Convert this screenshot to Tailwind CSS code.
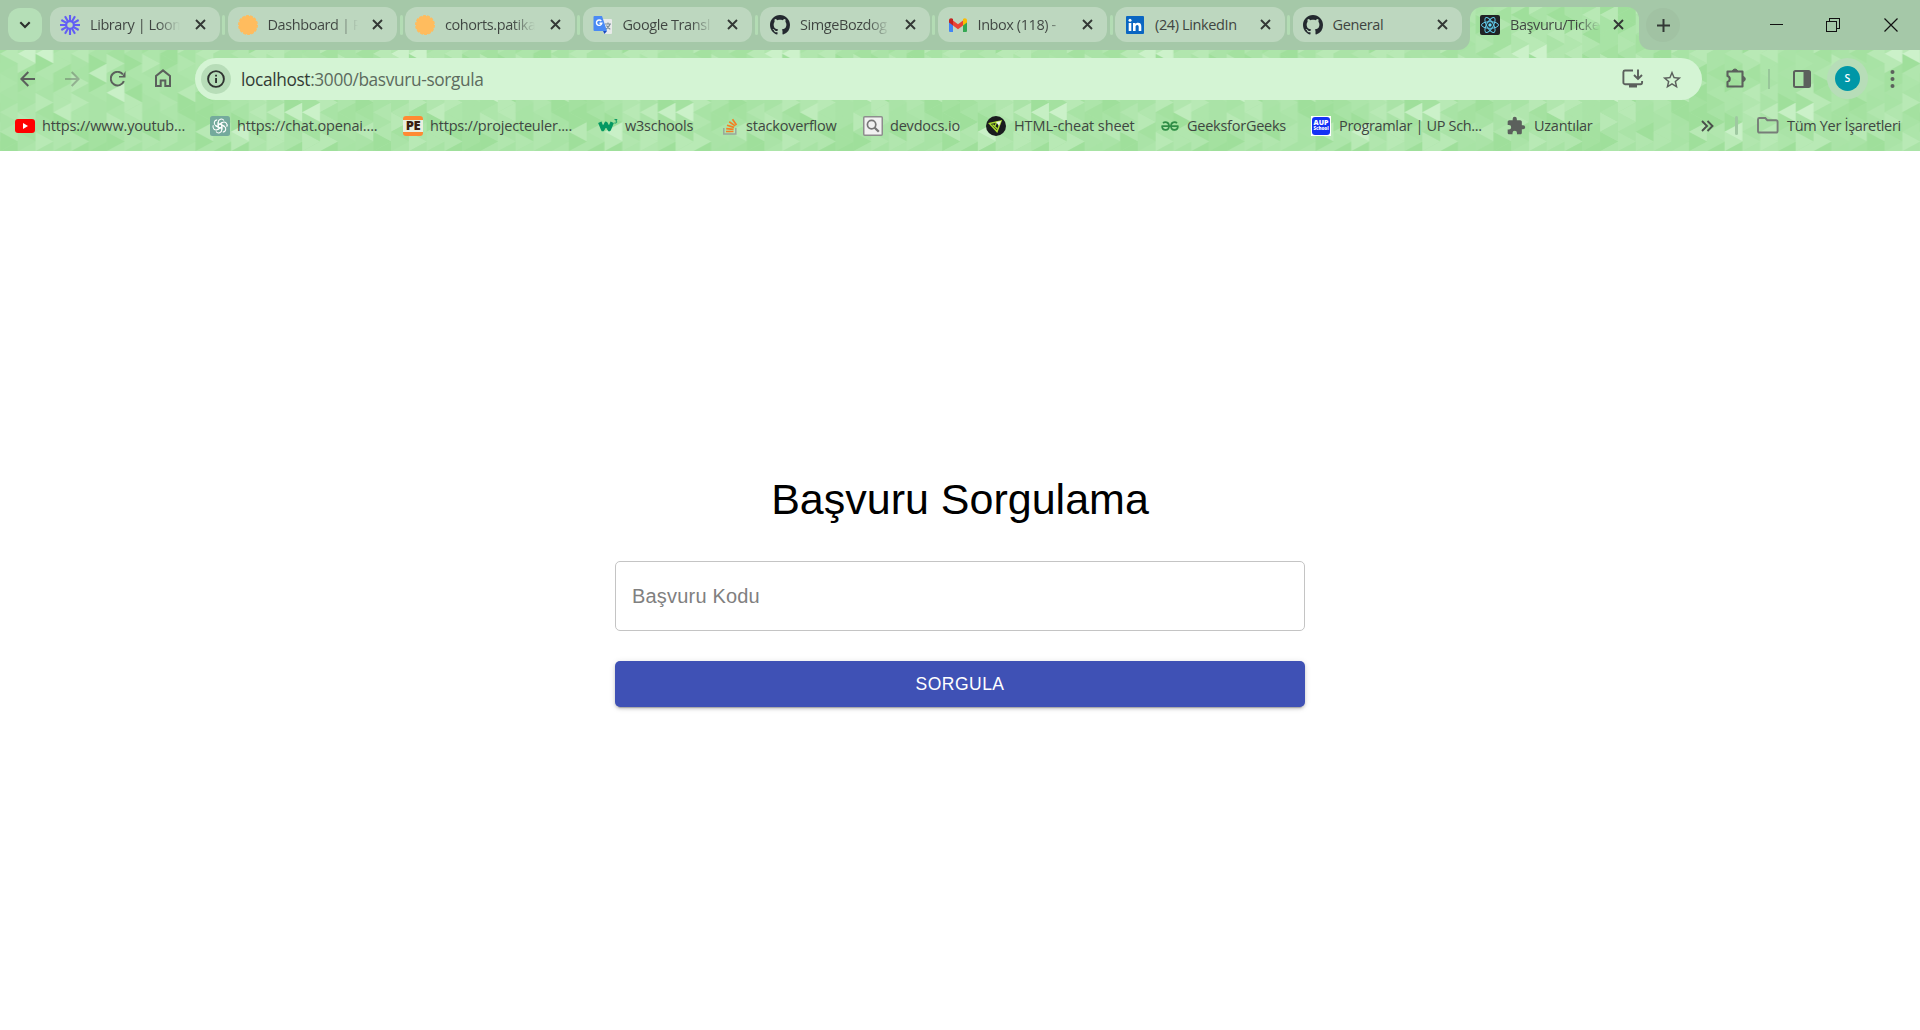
<!DOCTYPE html>
<html lang="tr">
<head>
<meta charset="utf-8">
<title>Başvuru/Ticket</title>
<script src="https://cdn.jsdelivr.net/npm/@tailwindcss/browser@4"></script>
</head>
<body class="h-[1030px] w-[1920px] overflow-hidden bg-white">
<!-- shared tab icons -->
<svg class="hidden">
  <symbol id="i-loom" viewBox="0 0 20 20"><g stroke="#625df5" fill="none"><circle cx="10" cy="10" r="3.900" stroke-width="2.300"/><path d="M10 0v6M10 14v6M0 10h6M14 10h6M5 1.340l2.700 4.600M12.300 14.060l2.700 4.600M1.340 5l4.600 2.700M14.060 12.300l4.600 2.700M1.340 15l4.600-2.700M14.060 7.700l4.600-2.700M5 18.660l2.700-4.600M12.300 5.940l2.700-4.600" stroke-width="2.100"/></g></symbol>
  <symbol id="i-sun" viewBox="0 0 20 20"><circle cx="10" cy="10" r="9.200" fill="#ffbc5e" stroke="#ffbc5e" stroke-width="1.600" stroke-dasharray="2.900 1.200"/></symbol>
  <symbol id="i-translate" viewBox="0 0 20 20"><path d="M8 4h10a1 1 0 0 1 1 1v13a1 1 0 0 1-1 1h-7z" fill="#e8eaea"/><path d="M12 9h6M15 7.500V9M17 9c-.6 2.500-2.200 4-4 5.200M13.500 10.500c.8 1.800 2 3 3.800 3.800" stroke="#7b8b96" stroke-width="1.100" fill="none"/><path d="M10 16h4l-2.500 3z" fill="#1b4bc0"/><path d="M1.500 1H9l5 15H1.500a1 1 0 0 1-1-1V2a1 1 0 0 1 1-1z" fill="#4a8af4"/><path d="M8.300 6A2.700 2.700 0 1 0 8.800 8.300H6.500" fill="none" stroke="#fff" stroke-width="1.400"/></symbol>
  <symbol id="i-github" viewBox="0 0 16 16"><path fill="#24292f" d="M8 0C3.580 0 0 3.580 0 8c0 3.540 2.290 6.530 5.470 7.590.4.070.55-.17.55-.38 0-.19-.01-.82-.01-1.490-2.010.37-2.530-.49-2.690-.94-.09-.23-.48-.94-.82-1.130-.28-.15-.68-.52-.01-.53.63-.01 1.080.58 1.230.82.72 1.210 1.870.87 2.330.66.070-.52.28-.87.51-1.070-1.780-.2-3.640-.89-3.640-3.950 0-.87.31-1.590.82-2.150-.08-.2-.36-1.020.08-2.120 0 0 .67-.21 2.200.82.64-.18 1.320-.27 2-.27s1.360.09 2 .27c1.530-1.040 2.200-.82 2.200-.82.44 1.100.16 1.920.08 2.120.51.56.82 1.270.82 2.150 0 3.070-1.870 3.750-3.650 3.950.29.25.54.73.54 1.480 0 1.070-.01 1.930-.01 2.200 0 .21.15.46.55.38A8.010 8.010 0 0 0 16 8c0-4.420-3.580-8-8-8z"/></symbol>
  <symbol id="i-gmail" viewBox="0 0 20 20"><path d="M1 6v10a1 1 0 0 0 1 1h3V8z" fill="#4285f4"/><path d="M19 6v10a1 1 0 0 1-1 1h-3V8z" fill="#34a853"/><path d="M5 5.500 10 9.300l5-3.800v5L10 14.300l-5-3.800z" fill="#ea4335"/><path d="M1 5.500C1 3 3.500 2.500 5 4v6.500L1 7.600z" fill="#c5221f"/><path d="M19 5.500C19 3 16.500 2.500 15 4v6.500l4-2.900z" fill="#fbbc04"/></symbol>
  <symbol id="i-linkedin" viewBox="0 0 20 20"><rect x="1" y="1" width="18" height="18" rx="1" fill="#0a66c2"/><path d="M3.700 8h2.600v8H3.700zM8 8h2.500v1.200C11 8.300 12 7.800 13 7.800c2.600 0 3.300 1.600 3.300 4V16h-2.600v-3.800c0-1.200-.2-2.200-1.500-2.200s-1.600 1-1.600 2.200V16H8z" fill="#fff"/><circle cx="5" cy="5.300" r="1.500" fill="#fff"/></symbol>
  <symbol id="i-x" viewBox="0 0 11 11"><path d="m1 1 9 9M10 1l-9 9" stroke="#333835" stroke-width="1.900"/></symbol>
</svg>
<div class="flex h-full flex-col">
<header class="relative isolate flex h-[151px] flex-none flex-col overflow-hidden bg-[#a9e2a5] font-['Open_Sans','Noto_Sans',sans-serif] text-[#3f4541]">
  <!-- triangle theme texture -->
  <svg class="absolute inset-0 -z-10" width="1920" height="151">
    <defs><pattern id="tri" x="213.3" y="5" width="373.38" height="156" patternUnits="userSpaceOnUse"></pattern></defs>
    <rect width="1920" height="151" fill="url(#tri)"/>
  </svg>

  <!-- tab strip -->
  <div class="flex h-[50px] flex-none">
    <div class="flex h-[50px] w-[1470px] rounded-br-[12px] bg-[#a5c8a8] pt-[7px] pl-2">
      <div class="mt-px mr-2 flex h-[34px] w-[34px] flex-none items-center justify-center rounded-[12px] bg-[#b5dfb7]">
        <svg width="12" height="8" viewBox="0 0 12 8" fill="none" stroke="#2c302d" stroke-width="2.100"><path d="M1.300 1.300 6 6l4.700-4.700"/></svg>
      </div>
      <div class="flex h-[35px]" id="tabs"></div>
    </div>
    <!-- active tab -->
    <div class="flex w-[169px] flex-none flex-col">
      <svg class="flex-none" width="169" height="19" viewBox="0 0 169 19"><path d="M0 0h169v19a12 12 0 0 0-12-12H12A12 12 0 0 0 0 19z" fill="#a5c8a8"/></svg>
      <div class="-mt-[12px] flex h-[35px] items-center pl-[10px]">
        <svg class="flex-none" width="20" height="20" viewBox="0 0 20 20"><rect width="20" height="20" rx="2" fill="#212325"/><g fill="none" stroke="#61c9e8" stroke-width="1"><ellipse cx="10" cy="10" rx="8.500" ry="3.300"/><ellipse cx="10" cy="10" rx="8.500" ry="3.300" transform="rotate(60 10 10)"/><ellipse cx="10" cy="10" rx="8.500" ry="3.300" transform="rotate(120 10 10)"/></g><circle cx="10" cy="10" r="1.700" fill="#61dafb"/></svg>
        <span class="ml-[10px] w-[90px] overflow-hidden whitespace-nowrap bg-linear-to-r from-[#3f4541] from-75% to-[#3f4541]/0 bg-clip-text text-[14.500px] tracking-[-0.42px] text-transparent">Başvuru/Ticket</span>
        <svg class="ml-[13px] flex-none" width="11" height="11"><use href="#i-x"/></svg>
      </div>
    </div>
    <div class="flex flex-1 rounded-bl-[12px] bg-[#a5c8a8] pt-2 pl-[7px]">
      <div class="flex h-[34px] w-[34px] items-center justify-center rounded-full bg-[#a1c2a3]"><svg width="13" height="13" stroke="#333835" stroke-width="2"><path d="M6.500 0v13M0 6.500h13"/></svg></div>
      <div class="ml-[90px] flex h-[33px] items-center">
        <svg width="13" height="13" stroke="#111" shape-rendering="crispEdges"><path d="M0 6.500h13"/></svg>
        <svg class="ml-[43px]" width="14" height="14" stroke="#111" fill="none" shape-rendering="crispEdges"><path d="M.5 3.500h10v10H.5zM3.500 3V.5h10v10H11"/></svg>
        <svg class="ml-[44px]" width="14" height="14" stroke="#111" stroke-width="1.200"><path d="m.5.5 13 13M13.500.5l-13 13"/></svg>
      </div>
    </div>
  </div>

  <!-- toolbar -->
  <div class="flex h-[50px] flex-none items-end">
    <div class="flex h-[42px] w-[195px] flex-none items-center pl-[20px]">
      <svg width="15" height="16" viewBox="0 0 15 16" fill="none" stroke="#5b605c" stroke-width="2"><path d="M15 8H1.500M8.300 1 1.400 8l6.900 7"/></svg>
      <svg class="ml-[30px] opacity-40" width="15" height="16" viewBox="0 0 15 16" fill="none" stroke="#5b605c" stroke-width="2"><path d="M0 8h13.500M6.700 1l6.900 7-6.900 7"/></svg>
      <svg class="ml-[30px]" width="16" height="16" viewBox="0 0 16 16" fill="none" stroke="#5b605c" stroke-width="2"><path d="M13.900 10.200A6.800 6.800 0 1 1 13 3.500"/><path d="M15.500 0v6.500H9V5h3.500z" fill="#5b605c" stroke="none"/></svg>
      <svg class="-mt-[2px] ml-[29px]" width="16" height="18" viewBox="0 0 16 18" fill="none" stroke="#5b605c" stroke-width="2"><path d="M1 7v10h4.700v-5.500h4.600V17H15V7L8 1.400z"/></svg>
    </div>
    <div class="flex h-[42px] w-[1507px] flex-none items-center rounded-full bg-[#d4f4d4] pl-[6px]">
      <div class="flex size-[30px] items-center justify-center rounded-full bg-[#b7ddb8]"><svg width="18" height="18" viewBox="0 0 18 18"><circle cx="9" cy="9" r="7.900" fill="none" stroke="#2f3330" stroke-width="1.900"/><path d="M8.100 8h1.900v5H8.100zM8.100 4.700h1.900v1.900H8.100z" fill="#2f3330"/></svg></div>
      <span class="mt-[2px] ml-[10px] w-[1381px] flex-none text-[17.300px] tracking-[-0.36px] text-[#5c6b5e]"><b class="font-normal text-[#333b35]">localhost</b>:3000/basvuru-sorgula</span>
      <svg width="22" height="20" viewBox="0 0 22 20" fill="none" stroke="#5b605c" stroke-width="1.900"><path d="M11 1.500H3A1.600 1.600 0 0 0 1.400 3v10.500A1.600 1.600 0 0 0 3 15.200h15.500a1.600 1.600 0 0 0 1.600-1.600V12M16 .5v9M12 6l4 4 4-4"/><path d="M7 15h8v3.500H7z" fill="#5b605c" stroke="none"/></svg>
      <svg class="mt-px ml-[17px]" width="22" height="22" viewBox="0 0 24 24" fill="#5b605c"><path d="m22 9.240-7.190-.62L12 2 9.190 8.630 2 9.240l5.460 4.730L5.820 21 12 17.270 18.180 21l-1.630-7.030zM12 15.400l-3.760 2.270 1-4.280-3.320-2.880 4.380-.38L12 6.100l1.710 4.040 4.380.38-3.320 2.880 1 4.280z"/></svg>
    </div>
    <div class="flex h-[42px] flex-1 items-center pl-[23px]">
      <svg class="-mt-[3px]" width="22" height="22" viewBox="0 0 22 22"><path d="M2.500 4.500h15v15h-15v-4.600a3 3 0 0 0 0-5.800z" fill="none" stroke="#5b605c" stroke-width="2.100" stroke-linejoin="round"/><path d="M7.400 4a2.700 2.700 0 0 1 5.200 0zM18.300 9.400a2.700 2.700 0 0 1 0 5.200z" fill="#5b605c" stroke="#5b605c"/></svg>
      <i class="ml-[21px] h-[20px] w-[2px] bg-[#98c69a]"></i>
      <svg class="ml-[23px]" width="18" height="18"><rect x="1" y="1" width="16" height="16" rx="1.500" fill="none" stroke="#5b605c" stroke-width="2"/><path d="M10.500 1H17v16h-6.500z" fill="#5b605c"/></svg>
      <div class="-mt-px ml-[16px] flex size-[41px] items-center justify-center rounded-full bg-[#b7ddb8]"><div class="flex size-[25px] items-center justify-center rounded-full bg-[#0097a7] text-[10.500px] font-semibold text-white">S</div></div>
      <svg class="ml-[22px]" width="5" height="18" fill="#5b605c"><circle cx="2.500" cy="2" r="2"/><circle cx="2.500" cy="9" r="2"/><circle cx="2.500" cy="16" r="2"/></svg>
    </div>
  </div>

  <!-- bookmarks -->
  <nav class="flex flex-1 items-center pl-[15px] text-[14.500px] tracking-[-0.25px] whitespace-nowrap text-[#3f4742]">
    <a class="flex w-[195px] flex-none items-center gap-[7px] tracking-[-0.15px]"><svg width="20" height="20"><rect y="3" width="20" height="14" rx="3" fill="#f00"/><path d="m8 7 5 3-5 3z" fill="#fff"/></svg>https://www.youtub...</a>
    <a class="flex w-[193px] flex-none items-center gap-[7px] tracking-[-0.15px]"><svg width="20" height="20" viewBox="0 0 20 20"><rect width="20" height="20" rx="2.500" fill="#74aa9c"/><g fill="none" stroke="#fff" stroke-width="1.100"><path id="petal" d="M8.200 11V6.200a3.100 3.100 0 0 1 5.700-1.700M8.200 8.900l4.100-2.400"/><use href="#petal" transform="rotate(60 10 10)"/><use href="#petal" transform="rotate(120 10 10)"/><use href="#petal" transform="rotate(180 10 10)"/><use href="#petal" transform="rotate(240 10 10)"/><use href="#petal" transform="rotate(300 10 10)"/></g></svg>https://chat.openai....</a>
    <a class="flex w-[195px] flex-none items-center gap-[7px] tracking-[-0.2px]"><span class="flex h-[20px] w-[20px] items-center justify-center rounded-[3px] border-y-[4px] border-[#ff8a33] bg-[#e9efe0] text-[13px] leading-none font-extrabold tracking-[-0.5px] text-[#3b1e10]">PE</span>https://projecteuler....</a>
    <a class="flex w-[123px] flex-none items-center gap-[7px]"><svg width="20" height="20" viewBox="0 0 20 20" fill="none" stroke="#059862"><path d="m1.800 6.300 3 7.200 3.200-6 3.200 6 3-7.200" stroke-width="3.600" stroke-linejoin="round"/><path d="M16.500 3.600h2.500l-1.300 1.500c1.700 0 1.700 2.300-1.300 1.900" stroke-width="1"/></svg>w3schools</a>
    <a class="flex w-[142px] flex-none items-center gap-[5px] tracking-[-0.2px]"><svg width="20" height="20" viewBox="0 0 20 20" fill="none"><path d="M2.800 12v6h12v-6" stroke="#9aa79b" stroke-width="1.500"/><path d="M5 15.500h7.500M5.200 12.600l7.400.8M6 9.200l7 2.200M8.200 5.700l6 4.200M11.500 3.200l4 5.800" stroke="#f48024" stroke-width="1.700"/></svg>stackoverflow</a>
    <a class="flex w-[123px] flex-none items-center gap-[7px] tracking-[-0.2px]"><svg width="20" height="20"><rect x=".75" y=".75" width="18.500" height="18.500" rx="1" fill="#f1f1f1" stroke="#8d8d8d" stroke-width="1.500"/><circle cx="8.600" cy="8.600" r="4.200" fill="none" stroke="#777" stroke-width="1.700"/><path d="m11.500 11.500 4.300 4.300" stroke="#777" stroke-width="2.300"/></svg>devdocs.io</a>
    <a class="flex w-[174px] flex-none items-center gap-2 tracking-[-0.1px]"><svg width="20" height="20"><circle cx="10" cy="10" r="10" fill="#1a1c1e"/><path d="M3.500 7.500 15 5l-4 10.500z" fill="none" stroke="#a8d930" stroke-width="1.500"/><path d="m6.500 8.500 5 4.500M11 5.500 9 10" stroke="#a8d930" stroke-width="1.300"/><path d="m10 6 5-1-2 5z" fill="#e9f6e0"/></svg>HTML-cheat sheet</a>
    <a class="flex w-[151px] flex-none items-center gap-[7px]"><svg width="20" height="20" viewBox="0 0 20 20" fill="none" stroke="#2f8d46" stroke-width="1.700"><path d="M1.500 10.200h17M3 7.200c1.700-1.700 6-1.300 6 2.800 0 5-6.500 5.500-7 .2M17 7.200c-1.700-1.700-6-1.300-6 2.800 0 5 6.500 5.500 7 .2"/></svg>GeeksforGeeks</a>
    <a class="flex w-[195px] flex-none items-center gap-2 tracking-[-0.33px]"><span class="flex size-[20px] items-center justify-center bg-white"><span class="flex size-[18px] flex-col items-center justify-center rounded-[3px] bg-[#1431f5] font-extrabold tracking-normal text-white"><span class="text-[7px] leading-[6px]">AUP</span><span class="text-[4.500px] leading-[5px]">School</span></span></span>Programlar | UP Sch...</a>
    <a class="flex w-[195px] flex-none items-center gap-2"><svg width="20" height="20" viewBox="0 0 24 24" fill="#5b605c"><path d="M20.500 11H19V7c0-1.100-.9-2-2-2h-4V3.500a2.500 2.500 0 0 0-5 0V5H4c-1.100 0-1.990.9-1.990 2v3.800H3.500a2.700 2.700 0 0 1 0 5.400H2V20c0 1.100.9 2 2 2h3.800v-1.500a2.700 2.700 0 0 1 5.400 0V22H17c1.100 0 2-.9 2-2v-4h1.500a2.500 2.500 0 0 0 0-5z"/></svg>Uzantılar</a>
    <svg width="13" height="12" viewBox="0 0 13 12" fill="none" stroke="#4a504b" stroke-width="1.900"><path d="m1 1 5 5-5 5M6.500 1l5 5-5 5"/></svg>
    <i class="ml-[21px] h-[19px] w-[3px] rounded bg-[#9fc8a1]"></i>
    <svg class="ml-[19px]" width="22" height="17" viewBox="0 0 22 17" fill="none" stroke="#777d78" stroke-width="1.900"><path d="M2.500 1h5.800l2 2.200h8.700a1.600 1.600 0 0 1 1.600 1.600v9.100a1.600 1.600 0 0 1-1.600 1.600H2.600A1.600 1.600 0 0 1 1 13.900V2.500A1.500 1.500 0 0 1 2.500 1z"/></svg>
    <span class="ml-[8px] tracking-[-0.32px]">Tüm Yer İşaretleri</span>
  </nav>
</header>

<main class="flex flex-1 justify-center font-['Liberation_Sans',Arial,sans-serif]">
  <div class="flex w-[690px] flex-col pt-[322px]">
    <h1 class="text-center text-[43px] leading-[52px] text-black">Başvuru Sorgulama</h1>
    <input class="mt-[36px] h-[70px] rounded-[5px] border border-[#c4c4c4] px-[16px] text-[20px] tracking-[0.19px] placeholder:text-[#808080]" placeholder="Başvuru Kodu">
    <button class="mt-[30px] h-[46px] rounded-[5px] bg-[#3f51b5] text-[17.500px] tracking-[0.5px] text-white shadow-[0_4px_1px_-3px_rgba(0,0,0,0.2),0_2px_3px_0_rgba(0,0,0,0.14),0_1px_6px_0_rgba(0,0,0,0.12)]">SORGULA</button>
  </div>
</main>
</div>
<script>
const tabs = [['loom', 'Library | Loom'], ['sun', 'Dashboard | P'], ['sun', 'cohorts.patika'], ['translate', 'Google Transl'],
  ['github', 'SimgeBozdog'], ['gmail', 'Inbox (118) -'], ['linkedin', '(24) LinkedIn', 1], ['github', 'General', 1]];
document.getElementById('tabs').innerHTML = tabs.map(([icon, title, whole], i) => `
  <div class="flex w-[177.5px] flex-none items-center">
    <div class="flex h-[35px] w-[169.5px] items-center rounded-[12px] bg-[#bdd7bf] pl-[10px]">
      <svg class="flex-none" width="20" height="20"><use href="#i-${icon}"/></svg>
      <span class="${whole
        ? 'ml-[10px] w-[90px] whitespace-nowrap text-[14.500px] tracking-[-0.38px]'
        : 'ml-[10px] w-[90px] overflow-hidden whitespace-nowrap bg-linear-to-r from-[#3f4541] from-75% to-[#3f4541]/0 bg-clip-text text-[14.500px] tracking-[-0.42px] text-transparent'}">${title}</span>
      <svg class="ml-[14.5px] flex-none" width="11" height="11"><use href="#i-x"/></svg>
    </div>
    ${i < 7 ? '<i class="ml-[2.5px] h-[20px] w-[3px] rounded bg-[#b3dcb4]"></i>' : ''}
  </div>`).join('');

// One texture tile: 21 columns of interlocking arrowheads
const W = 17.78, H = 19.5, shades = ['#9fdf9b','#a4e1a0','#a8e3a5','#aae3a7','#ade5aa','#b1e6ae','#b8e9b5'];
const bright = {'3,5':'#bdebba','4,5':'#c6efc4','5,5':'#cbf1c9','1,6':'#c9f0c7','10,2':'#cbf1c9','11,2':'#cdf2cb','15,4':'#c9f0c7','12,5':'#bfecbc','14,3':'#c1edbf'};
let seed = 11;
const rnd = () => (seed = (seed * 16807) % 2147483647) / 2147483647;
let out = '';
for (let c = 0; c < 21; c++) {
  const x = c * W, x2 = x + W + .4;
  for (let r = -1; r < 8; r++) {
    const y = r * H, pick = () => shades[Math.floor(rnd() * shades.length)];
    out += `<path fill="${pick()}" d="M${x} ${y + H / 2}v${H}L${x2} ${y + H}z"/>`;
    out += `<path fill="${bright[c + ',' + r] || pick()}" d="M${x2} ${y}v${H}L${x} ${y + H / 2}z"/>`;
  }
}
document.getElementById('tri').innerHTML = out;
</script>
</body>
</html>
